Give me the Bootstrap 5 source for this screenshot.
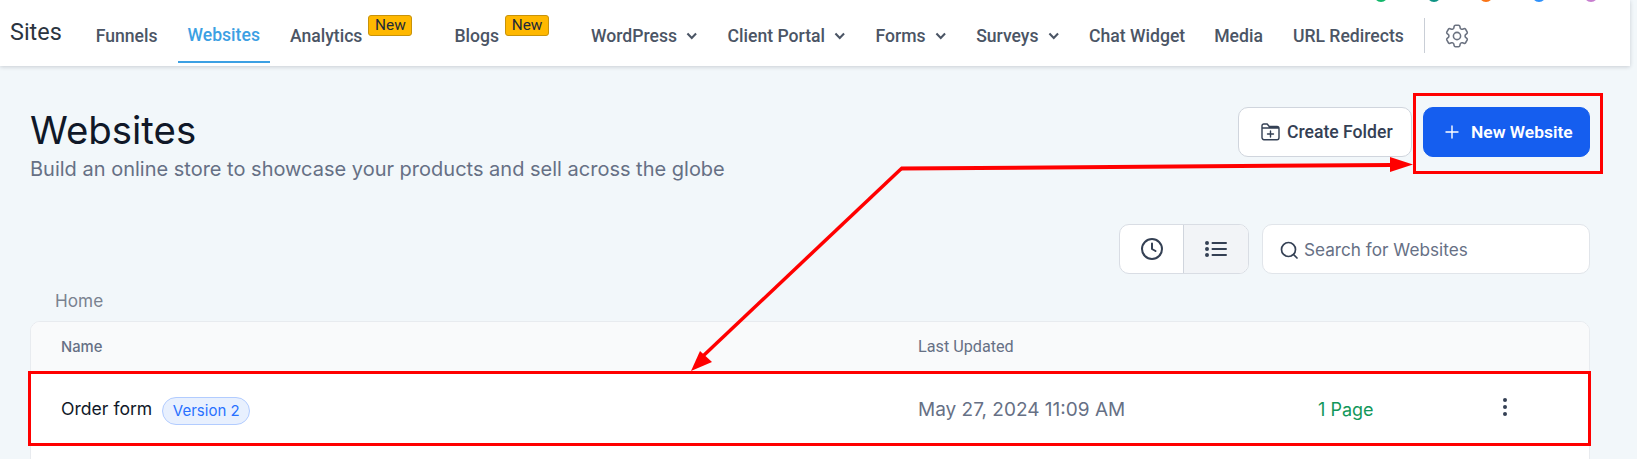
<!DOCTYPE html>
<html lang="en">
<head>
<meta charset="utf-8">
<title>Websites</title>
<link href="https://cdn.jsdelivr.net/npm/bootstrap@5.3.0/dist/css/bootstrap.min.css" rel="stylesheet">
<style>
html,body{height:459px;overflow:hidden}
body{background:#f2f7fa;font-family:"Inter","Liberation Sans",sans-serif;position:relative}
.topbar{width:1630px;height:66px;background:#fff;box-shadow:0 1px 4px rgba(16,24,40,.18);padding:0 0 0 10px}
.brand{font:400 23.4px/1 Roboto,sans-serif;color:#2b3440;width:75.7px;padding-top:21px}
.tablist{gap:10px;height:63px}
.tablink{font:500 17.6px/24px Roboto,sans-serif;color:#4b5565;padding:10px 10px 0;border-bottom:2px solid transparent;display:flex;align-items:center;text-decoration:none;white-space:nowrap}
.tablink.on{color:#3ca0e3;border-bottom-color:#3ca0e3;padding-top:8px}
.tablink svg{margin-left:9px}
.tablink.tight{padding-right:9px}
.newtag{align-self:flex-start;margin:5px 12px 0 6px;height:21px;width:44px;padding:0;background:#ffb800;border:1px solid #c8930a;border-radius:3px;color:#1d2939;font:400 15.400px/18px Roboto,sans-serif;text-align:center}
.sep{width:1px;height:35px;background:#c9ced6;margin:18px 0 0 10px}
.gearbtn{margin:24px 0 0 20px;line-height:0}
.pagewrap{padding:41px 47px 0 30px}
.pagetitle{font:400 38.4px/46px Inter,sans-serif;color:#101828;margin:0}
.pagesub{font:400 20px/28px Inter,sans-serif;color:#667085;margin:2px 0 0}
.headrow{height:76px}
.btnlight,.btnblue{height:50px;border-radius:10px;font:500 17.6px/24px Roboto,sans-serif;display:inline-flex;align-items:center}
.btnlight{width:174px;background:#fff;border:1px solid #d0d5dd;color:#344054;padding:0 0 0 22px;gap:7px}
.btnblue{width:167px;background:#155eef;border:1px solid #155eef;color:#fff;padding:0 0 0 21px;gap:12px;font-weight:600;font-size:17.4px;margin-left:11px}
.toolrow{margin-top:41px;height:50px;gap:13px}
.toggle{width:130px;height:50px;border:1px solid #d9dde4;border-radius:10px;overflow:hidden;background:#fff}
.togglecell{width:63px;display:flex;align-items:center;justify-content:center}
.togglecell+.togglecell{flex:1;background:#f2f4f7;border-left:1px solid #d0d5dd}
.searchbox{width:328px;height:50px;background:#fff;border:1px solid #e1e5ea;border-radius:10px;padding:1px 0 0 17px;gap:6px;color:#667085;font:400 17.2px/24px Inter,sans-serif}
.crumb{font:400 17.2px/24px Inter,sans-serif;color:#7a8290;margin:15px 0 8px 25px}
.sheet{border:1px solid #e8ebef;border-radius:10px 10px 0 0;background:#fff;height:300px;overflow:hidden}
.sheethead{height:52px;background:#f9fafb;color:#667085;font:500 14.800px/20px Inter,sans-serif;display:grid;grid-template-columns:857px 400px 1fr;padding:15px 0 0 30px}
.sheethead span+span{font-family:Roboto,sans-serif;font-weight:400;font-size:16.2px}
.sheetrow{height:73px;display:grid;grid-template-columns:857px 400px 184px 1fr;align-items:center;padding-left:30px;background:#fff}
.rowname{color:#101828;font:400 17.6px/24px Inter,sans-serif;display:flex;align-items:center;gap:10px}
.rowname b{font-weight:400;margin-top:-3px}
.verpill{width:88px;height:28px;border:1px solid #b2ccff;border-radius:14px;background:#e8f0fe;color:#2970ff;font:400 15px/25px Inter,sans-serif;text-align:center}
.rowdate{color:#667085;font:400 19px/24px Inter,sans-serif;margin-top:-1px}
.rowpages{color:#12975a;font:400 18px/24px Inter,sans-serif;margin-top:-1px}
.kebab{line-height:0;margin-top:-8px}
.marks{position:absolute;left:0;top:0;pointer-events:none}
</style>
</head>
<body>
<nav class="topbar d-flex align-items-start">
  <div class="brand">Sites</div>
  <div class="tablist d-flex">
    <a class="tablink" href="#">Funnels</a>
    <a class="tablink on" href="#">Websites</a>
    <a class="tablink" href="#">Analytics<span class="badge newtag">New</span></a>
    <a class="tablink" href="#">Blogs<span class="badge newtag">New</span></a>
    <a class="tablink" href="#">WordPress<svg width="11.500" height="8" viewBox="0 0 12 8"><path d="M1.500 1.500 6 6l4.500-4.500" fill="none" stroke="#4b5565" stroke-width="2.200"/></svg></a>
    <a class="tablink" href="#">Client Portal<svg width="11.500" height="8" viewBox="0 0 12 8"><path d="M1.500 1.500 6 6l4.500-4.500" fill="none" stroke="#4b5565" stroke-width="2.200"/></svg></a>
    <a class="tablink" href="#">Forms<svg width="11.500" height="8" viewBox="0 0 12 8"><path d="M1.500 1.500 6 6l4.500-4.500" fill="none" stroke="#4b5565" stroke-width="2.200"/></svg></a>
    <a class="tablink" href="#">Surveys<svg width="11.500" height="8" viewBox="0 0 12 8"><path d="M1.500 1.500 6 6l4.500-4.500" fill="none" stroke="#4b5565" stroke-width="2.200"/></svg></a>
    <a class="tablink tight" href="#">Chat Widget</a>
    <a class="tablink" href="#">Media</a>
    <a class="tablink" href="#">URL Redirects</a>
  </div>
  <div class="sep"></div>
  <div class="gearbtn"><svg width="24" height="24" viewBox="2 2 20 20" fill="none" stroke="#6b7280" stroke-width="1.300" stroke-linecap="round" stroke-linejoin="round"><path d="M9.594 3.940c.09-.542.56-.94 1.110-.94h2.593c.55 0 1.020.398 1.110.94l.213 1.281c.063.374.313.686.645.87.074.04.147.083.22.127.324.196.72.257 1.075.124l1.217-.456a1.125 1.125 0 011.370.49l1.296 2.247a1.125 1.125 0 01-.26 1.431l-1.003.827c-.293.24-.438.613-.431.992a6.759 6.759 0 010 .255c-.007.378.138.75.43.99l1.005.828c.424.35.534.954.26 1.430l-1.298 2.247a1.125 1.125 0 01-1.369.491l-1.217-.456c-.355-.133-.75-.072-1.076.124a6.570 6.570 0 01-.22.128c-.331.183-.581.495-.644.869l-.213 1.280c-.09.543-.56.941-1.110.941h-2.594c-.55 0-1.020-.398-1.110-.94l-.213-1.281c-.062-.374-.312-.686-.644-.87a6.520 6.520 0 01-.22-.127c-.325-.196-.72-.257-1.076-.124l-1.217.456a1.125 1.125 0 01-1.369-.49l-1.297-2.247a1.125 1.125 0 01.26-1.431l1.004-.827c.292-.24.437-.613.43-.992a6.932 6.932 0 010-.255c.007-.378-.138-.75-.43-.99l-1.004-.828a1.125 1.125 0 01-.26-1.430l1.297-2.247a1.125 1.125 0 011.370-.491l1.216.456c.356.133.751.072 1.076-.124.072-.044.146-.087.22-.128.332-.183.582-.495.644-.869l.214-1.281z"/><circle cx="12" cy="12" r="3"/></svg></div>
</nav>

<main class="pagewrap">
  <div class="headrow d-flex justify-content-between align-items-start">
    <div>
      <h1 class="pagetitle">Websites</h1>
      <p class="pagesub">Build an online store to showcase your products and sell across the globe</p>
    </div>
    <div class="d-flex">
      <button type="button" class="btn btnlight"><svg width="19" height="18" viewBox="0 0 19 18" fill="none" stroke="#344054" stroke-width="1.400" stroke-linecap="round" stroke-linejoin="round"><path d="M1 14.500V2.800C1 1.800 1.800 1 2.800 1h3.400l2 2.500h7.800c1 0 2 .8 2 2v9c0 1.200-1 2.200-2 2.200H3c-1.200 0-2-1-2-2.200zM1 5h17"/><path d="M9.500 8v6M6.500 11h6"/></svg>Create Folder</button>
      <button type="button" class="btn btnblue"><svg width="14" height="14" viewBox="0 0 14 14" stroke="#fff" stroke-width="1.400" stroke-linecap="round"><path d="M7 1v12M1 7h12"/></svg>New Website</button>
    </div>
  </div>

  <div class="toolrow d-flex justify-content-end">
    <div class="toggle d-flex">
      <div class="togglecell"><svg width="24" height="24" viewBox="0 0 24 24" fill="none" stroke="#344054" stroke-width="2" stroke-linecap="round" stroke-linejoin="round"><circle cx="12" cy="12" r="10"/><path d="M12 6.500V12l3.500 2"/></svg></div>
      <div class="togglecell"><svg width="22" height="18" viewBox="0 0 22 18" fill="none" stroke="#344054" stroke-width="2" stroke-linecap="round"><path d="M7.500 3H21M7.500 9H21M7.500 15H21"/><circle cx="2" cy="3" r="1" fill="#344054"/><circle cx="2" cy="9" r="1" fill="#344054"/><circle cx="2" cy="15" r="1" fill="#344054"/></svg></div>
    </div>
    <div class="searchbox d-flex align-items-center"><svg width="18" height="18" viewBox="0 0 18 18" fill="none" stroke="#344054" stroke-width="1.700" stroke-linecap="round"><circle cx="8.500" cy="8.500" r="7"/><path d="m13.500 13.500 3.500 3.500"/></svg><span>Search for Websites</span></div>
  </div>

  <div class="crumb">Home</div>

  <div class="sheet">
    <div class="sheethead"><span>Name</span><span>Last Updated</span></div>
    <div class="sheetrow">
      <div class="rowname"><b>Order form</b> <span class="badge verpill p-0">Version 2</span></div>
      <div class="rowdate">May 27, 2024 11:09 AM</div>
      <div class="rowpages">1 Page</div>
      <div class="kebab"><svg width="6" height="20" viewBox="0 0 6 20" fill="#344054"><circle cx="3" cy="3" r="2"/><circle cx="3" cy="10" r="2"/><circle cx="3" cy="17" r="2"/></svg></div>
    </div>
  </div>
</main>

<svg class="marks" width="1637" height="459" viewBox="0 0 1637 459" fill="none">
  <circle cx="1381" cy="-5" r="7" fill="#12b76a"/>
  <circle cx="1434" cy="-5" r="7" fill="#0e9384"/>
  <circle cx="1486" cy="-5" r="7" fill="#f97316"/>
  <circle cx="1539" cy="-5" r="7" fill="#2e90fa"/>
  <circle cx="1591" cy="-5" r="7" fill="#c77ecf"/>
  <rect x="1414.500" y="94.500" width="187" height="78" stroke="#f00" stroke-width="3"/>
  <rect x="29.500" y="372.500" width="1560" height="72" stroke="#f00" stroke-width="3"/>
  <path d="M901 168.500 1392 165" stroke="#f00" stroke-width="4"/>
  <path d="M1413 164.500 1390 157v15z" fill="#f00"/>
  <path d="M902 168 702 357" stroke="#f00" stroke-width="3.500"/>
  <path d="M691 371 700 351 712 362z" fill="#f00"/>
</svg>
<script src="https://cdn.jsdelivr.net/npm/bootstrap@5.3.0/dist/js/bootstrap.bundle.min.js"></script>
</body>
</html>
